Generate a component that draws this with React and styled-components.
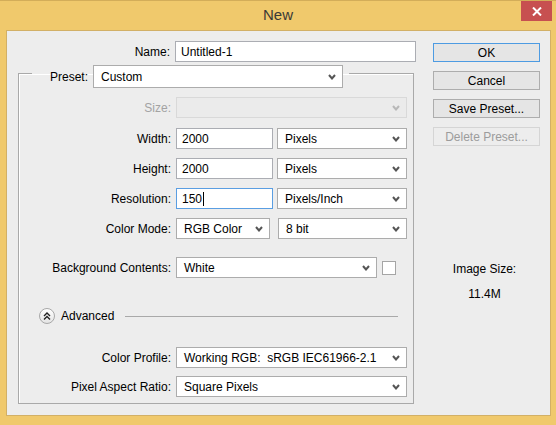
import React from "react";
import styled, { createGlobalStyle } from "styled-components";

const GlobalStyle = createGlobalStyle`
  html, body {
    margin: 0;
    padding: 0;
    background: #f0c96c;
  }
  body {
    font-family: "Liberation Sans", Arial, sans-serif;
    font-size: 12px;
    color: #000;
  }
`;

const Chevron = ({ disabled }) => (
  <svg width="8" height="6" viewBox="0 0 8 6">
    <polyline
      points="1,1 4,4.5 7,1"
      fill="none"
      stroke={disabled ? "#b8b8b8" : "#555"}
      strokeWidth="2"
    />
  </svg>
);

const App = () => {
  return (
    <>
      <GlobalStyle />
      <Window>
        <TitleBar>
          <span />
          <Title>New</Title>
          <CloseButton>
            <svg width="10" height="9" viewBox="0 0 10 9">
              <path d="M1 0.5 L9 8.5 M9 0.5 L1 8.5" stroke="#fff" strokeWidth="2" />
            </svg>
          </CloseButton>
        </TitleBar>

        <Client>
          <LeftPane>
            <NameRow>
              <Label>Name:</Label>
              <TextBox $width={241}>Untitled-1</TextBox>
            </NameRow>

            <GroupBox>
              <Legend>
                <Label>Preset:</Label>
                <Select $width={250} $height={23}>
                  Custom
                  <Chevron />
                </Select>
              </Legend>

              <Row $top={9}>
                <Label $disabled>Size:</Label>
                <Controls>
                  <Select $width={231} $disabled>
                    <span />
                    <Chevron disabled />
                  </Select>
                </Controls>
              </Row>

              <Row $top={10}>
                <Label>Width:</Label>
                <Controls $gap={4}>
                  <TextBox $width={97}>2000</TextBox>
                  <Select $width={130}>
                    Pixels
                    <Chevron />
                  </Select>
                </Controls>
              </Row>

              <Row $top={9}>
                <Label>Height:</Label>
                <Controls $gap={4}>
                  <TextBox $width={97}>2000</TextBox>
                  <Select $width={130}>
                    Pixels
                    <Chevron />
                  </Select>
                </Controls>
              </Row>

              <Row $top={9}>
                <Label>Resolution:</Label>
                <Controls $gap={4}>
                  <TextBox $width={97} $focused>
                    150
                    <Caret />
                  </TextBox>
                  <Select $width={130}>
                    Pixels/Inch
                    <Chevron />
                  </Select>
                </Controls>
              </Row>

              <Row $top={9}>
                <Label>Color Mode:</Label>
                <Controls $gap={8}>
                  <Select $width={94}>
                    RGB Color
                    <Chevron />
                  </Select>
                  <Select $width={129}>
                    8 bit
                    <Chevron />
                  </Select>
                </Controls>
              </Row>

              <Row $top={18}>
                <Label>Background Contents:</Label>
                <Controls $gap={5}>
                  <Select $width={201}>
                    White
                    <Chevron />
                  </Select>
                  <ColorSwatch />
                </Controls>
              </Row>

              <AdvancedRow>
                <ToggleIcon>
                  <svg width="16" height="16" viewBox="0 0 16 16">
                    <polyline points="5,8 8,5 11,8" fill="none" stroke="#222" strokeWidth="1.4" />
                    <polyline points="5,11.5 8,8.5 11,11.5" fill="none" stroke="#222" strokeWidth="1.4" />
                  </svg>
                </ToggleIcon>
                <span>Advanced</span>
                <Separator />
              </AdvancedRow>

              <Row $top={21}>
                <Label>Color Profile:</Label>
                <Controls>
                  <Select $width={231}>
                    Working RGB:&nbsp; sRGB IEC61966-2.1
                    <Chevron />
                  </Select>
                </Controls>
              </Row>

              <Row $top={8}>
                <Label>Pixel Aspect Ratio:</Label>
                <Controls>
                  <Select $width={231}>
                    Square Pixels
                    <Chevron />
                  </Select>
                </Controls>
              </Row>
            </GroupBox>
          </LeftPane>

          <RightPane>
            <Button $default>OK</Button>
            <Button>Cancel</Button>
            <Button>Save Preset...</Button>
            <Button disabled>Delete Preset...</Button>
            <SizeInfo>
              <div>Image Size:</div>
              <SizeValue>11.4M</SizeValue>
            </SizeInfo>
          </RightPane>
        </Client>
      </Window>
    </>
  );
};

const Window = styled.div`
  width: 556px;
  height: 425px;
  box-sizing: border-box;
  background: #f0c96c;
  border-top: 1px solid #d3ad59;
  display: flex;
  flex-direction: column;
`;

const TitleBar = styled.div`
  height: 29px;
  display: grid;
  grid-template-columns: 1fr auto 1fr;
  align-items: start;
`;

const Title = styled.div`
  font-size: 15px;
  line-height: 29px;
  color: #3a3a36;
  margin-top: -1px;
`;

const CloseButton = styled.div`
  justify-self: end;
  margin-right: 4px;
  width: 31px;
  height: 20px;
  background: #c75050;
  display: flex;
  align-items: center;
  justify-content: center;
`;

const Client = styled.div`
  flex: 1;
  margin: 0 5px 9px 6px;
  background: #ededed;
  border: 1px solid #d2b066;
  display: flex;
  padding-top: 10px;
`;

const LeftPane = styled.div`
  width: 410px;
  display: flex;
  flex-direction: column;
`;

const NameRow = styled.div`
  display: grid;
  grid-template-columns: 163px auto;
  column-gap: 5px;
  align-items: center;
`;

const Label = styled.div`
  justify-self: end;
  white-space: nowrap;
  color: ${(p) => (p.$disabled ? "#a3a3a3" : "#000")};
`;

const TextBox = styled.div`
  box-sizing: border-box;
  width: ${(p) => p.$width}px;
  height: 21px;
  background: #fff;
  border: 1px solid ${(p) => (p.$focused ? "#5a9ee2" : "#abadb3")};
  padding: 0 5px;
  display: flex;
  align-items: center;
`;

const Caret = styled.span`
  display: inline-block;
  width: 1px;
  height: 14px;
  background: #000;
  margin-left: 1px;
`;

const Select = styled.div`
  box-sizing: border-box;
  width: ${(p) => p.$width}px;
  height: ${(p) => p.$height || 21}px;
  background: ${(p) => (p.$disabled ? "#ebebeb" : "#fff")};
  border: 1px solid ${(p) => (p.$disabled ? "#d9d9d9" : "#acacac")};
  padding: 0 6px 0 7px;
  display: flex;
  align-items: center;
  justify-content: space-between;
  white-space: nowrap;
`;

const GroupBox = styled.fieldset`
  box-sizing: border-box;
  width: 396px;
  margin: -4px 0 0 11px;
  padding: 0 0 6px 0;
  border: 1px solid #a9a9a9;
  box-shadow: inset 1px 1px 0 #fff;
`;

const Legend = styled.legend`
  display: flex;
  align-items: center;
  gap: 5px;
  margin-left: 13px;
  padding: 7px 6px 0 18px;
`;

const Row = styled.div`
  display: grid;
  grid-template-columns: 152px auto;
  column-gap: 5px;
  align-items: center;
  margin-top: ${(p) => p.$top}px;
`;

const Controls = styled.div`
  display: flex;
  align-items: center;
  gap: ${(p) => p.$gap || 0}px;
`;

const ColorSwatch = styled.div`
  width: 14px;
  height: 14px;
  box-sizing: border-box;
  background: #fff;
  border: 1px solid #a5a5a5;
`;

const AdvancedRow = styled.div`
  display: flex;
  align-items: center;
  height: 20px;
  margin-top: 28px;
  padding-left: 20px;
  gap: 6px;
`;

const ToggleIcon = styled.div`
  width: 16px;
  height: 16px;
  box-sizing: border-box;
  border-radius: 50%;
  border: 1px solid #a8a8a8;
  background: linear-gradient(#ffffff, #e4e4e4);
  display: flex;
  align-items: center;
  justify-content: center;

  svg {
    margin: -1px;
  }
`;

const Separator = styled.div`
  flex: 1;
  height: 1px;
  background: #a9a9a9;
  margin: 1px 15px 0 5px;
`;

const RightPane = styled.div`
  margin-left: 16px;
  padding-top: 2px;
  width: 107px;
  display: flex;
  flex-direction: column;
  gap: 9px;
`;

const Button = styled.div`
  box-sizing: border-box;
  height: 19px;
  width: 107px;
  display: flex;
  align-items: center;
  justify-content: center;
  background: ${(p) => (p.disabled ? "#ededed" : "#e5e5e5")};
  border: 1px solid
    ${(p) => (p.$default ? "#4d9be2" : p.disabled ? "#d5d5d5" : "#adadad")};
  color: ${(p) => (p.disabled ? "#9c9c9c" : "#000")};
`;

const SizeInfo = styled.div`
  margin-top: 107px;
  display: flex;
  flex-direction: column;
  align-items: center;
  padding-right: 4px;
`;

const SizeValue = styled.div`
  margin-top: 11px;
`;

export default App;
